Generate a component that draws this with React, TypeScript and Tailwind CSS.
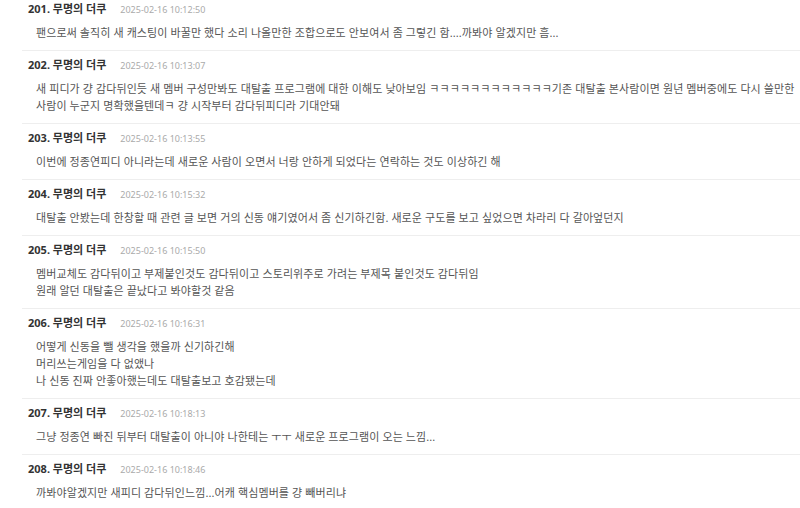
const comments = [
  {
    no: 201,
    at: '2025-02-16 10:12:50',
    lines: ['팬으로써 솔직히 새 캐스팅이 바꿀만 했다 소리 나올만한 조합으로도 안보여서 좀 그렇긴 함....까봐야 알겠지만 흠...'],
  },
  {
    no: 202,
    at: '2025-02-16 10:13:07',
    lines: [
      '새 피디가 걍 감다뒤인듯 새 멤버 구성만봐도 대탈출 프로그램에 대한 이해도 낮아보임 ㅋㅋㅋㅋㅋㅋㅋㅋㅋㅋㅋㅋ기존 대탈출 본사람이면 원년 멤버중에도 다시 쓸만한',
      '사람이 누군지 명확했을텐데ㅋ 걍 시작부터 감다뒤피디라 기대안돼',
    ],
  },
  {
    no: 203,
    at: '2025-02-16 10:13:55',
    lines: ['이번에 정종연피디 아니라는데 새로운 사람이 오면서 너랑 안하게 되었다는 연락하는 것도 이상하긴 해'],
  },
  {
    no: 204,
    at: '2025-02-16 10:15:32',
    lines: ['대탈출 안봤는데 한창할 때 관련 글 보면 거의 신동 얘기였어서 좀 신기하긴함. 새로운 구도를 보고 싶었으면 차라리 다 갈아엎던지'],
  },
  {
    no: 205,
    at: '2025-02-16 10:15:50',
    lines: [
      '멤버교체도 감다뒤이고 부제붙인것도 감다뒤이고 스토리위주로 가려는 부제목 붙인것도 감다뒤임',
      '원래 알던 대탈출은 끝났다고 봐야할것 같음',
    ],
  },
  {
    no: 206,
    at: '2025-02-16 10:16:31',
    lines: [
      '어떻게 신동을 뺄 생각을 했을까 신기하긴해',
      '머리쓰는게임을 다 없앴나',
      '나 신동 진짜 안좋아했는데도 대탈출보고 호감됐는데',
    ],
  },
  {
    no: 207,
    at: '2025-02-16 10:18:13',
    lines: ['그냥 정종연 빠진 뒤부터 대탈출이 아니야 나한테는 ㅜㅜ 새로운 프로그램이 오는 느낌...'],
  },
  {
    no: 208,
    at: '2025-02-16 10:18:46',
    lines: ['까봐야알겠지만 새피디 감다뒤인느낌...어캐 핵심멤버를 걍 빼버리냐'],
  },
]

export default function App() {
  return (
    <div className="w-[800px] h-[508px] overflow-hidden bg-white font-['Noto_Sans','Noto_Sans_CJK_KR',sans-serif]">
      <div className="ml-[22px] -mt-[6px]">
        {comments.map(c => (
          <div key={c.no} className="border-t border-[#eeeeee] pt-[6px] pb-[9px]">
            {/* author line */}
            <div className="flex items-baseline h-[20px] pl-[6px] whitespace-nowrap">
              <span className="text-[11px] font-bold text-[#333]">
                {c.no}. 무명의 더쿠
              </span>
              <span className="ml-[14px] text-[9px] text-[#aaaaaa]">{c.at}</span>
            </div>
            {/* body */}
            <div className="mt-[3px] pl-[14px] text-[11px] leading-[17px] text-[#555] tracking-[0.1px] whitespace-nowrap">
              {c.lines.map((l, i) => (
                <div key={i}>{l}</div>
              ))}
            </div>
          </div>
        ))}
      </div>
    </div>
  )
}
